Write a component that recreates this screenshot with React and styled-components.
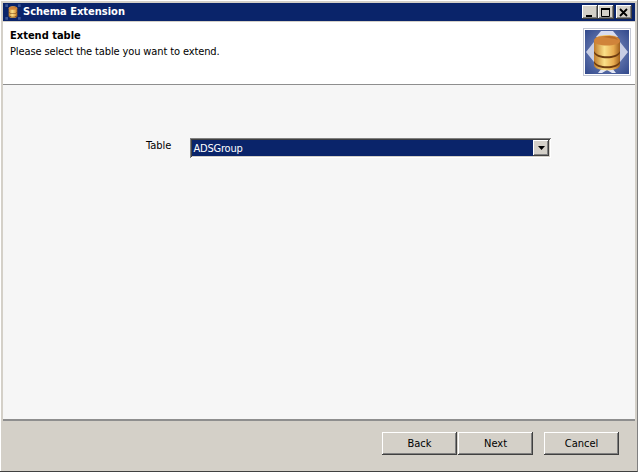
import React from "react";
import styled, { createGlobalStyle } from "styled-components";

const Global = createGlobalStyle`
  html, body { margin: 0; padding: 0; background: #d4d0c8; }
  * { box-sizing: border-box; }
`;
const Win = styled.div`
  width: 638px; height: 472px; display: flex; flex-direction: column;
  background: #d4d0c8; overflow: hidden;
  padding: 3px 2px 1px 3px;
  font-family: "DejaVu Sans Condensed", "DejaVu Sans", sans-serif; font-size: 11px; color: #000;
  border-bottom: 1px solid #404040; border-right: 1px solid #808080;
  box-shadow: inset 1px 1px 0 #fff;
`;
const TitleBar = styled.div`
  height: 18px; flex: none; background: #0a246a; display: flex; align-items: center;
  padding: 0 3px 0 0; color: #fff; font-weight: 700; font-size: 11px;
`;
const TitleIcon = styled.svg` width: 16px; height: 16px; margin: 0 2px 0 2px; flex: none; `;
const TitleText = styled.span` flex: 1; margin-top: -1px; `;
const CaptionBtn = styled.button`
  width: 16px; height: 14px; padding: 0; border: 0; background: #d4d0c8; display: flex;
  align-items: center; justify-content: center; margin-left: ${p => p.$gap || 0}px;
  box-shadow: inset -1px -1px 0 #404040, inset 1px 1px 0 #fff, inset -2px -2px 0 #808080;
`;
const Header = styled.div`
  height: 63px; flex: none; background: #fff; display: flex; justify-content: space-between;
  padding: 7px 4px 0 7px; border-bottom: 1px solid #8e8e8e; margin-top: 1px;
`;
const Heading = styled.div` font-weight: 700; font-size: 11px; line-height: 13px; `;
const Sub = styled.div` line-height: 13px; margin-top: 3px; letter-spacing: -0.12px; `;
const HeaderIcon = styled.svg` width: 48px; height: 48px; flex: none; margin-top: -1px; `;
const Body = styled.div`
  flex: 1; background: #f6f6f6; padding-top: 53px; display: flex; align-items: flex-start;
`;
const FieldLabel = styled.label` margin-top: 1px; padding-left: 143px; line-height: 13px; `;
const Select = styled.div`
  margin-left: 19px; width: 361px; height: 20px; background: #fff; padding: 2px; display: flex;
  box-shadow: inset 1px 1px 0 #808080, inset -1px -1px 0 #fff, inset 2px 2px 0 #404040, inset -2px -2px 0 #d4d0c8;
`;
const SelectValue = styled.div`
  flex: 1; background: #0a246a; color: #fff; line-height: 17px; padding-left: 1px; letter-spacing: -0.2px;
`;
const Arrow = styled.div`
  width: 16px; background: #d4d0c8; display: flex; align-items: center; justify-content: center;
  box-shadow: inset -1px -1px 0 #404040, inset 1px 1px 0 #fff, inset -2px -2px 0 #808080;
`;
const Footer = styled.div`
  height: 51px; flex: none; border-top: 2px solid #8e8e8e; background: #d4d0c8; display: flex;
  justify-content: flex-end; padding: 11px 16px 0 0;
`;
const Btn = styled.button`
  width: 75px; height: 23px; border: 0; padding: 0; background: #d4d0c8; color: #000;
  font: inherit; margin-left: ${p => p.$gap}px;
  box-shadow: inset -1px -1px 0 #404040, inset 1px 1px 0 #fff, inset -2px -2px 0 #808080;
`;

const Cylinder = ({ id }) => (
  <>
    <defs>
      <linearGradient id={id} x1="0" x2="1" y1="0" y2="0">
        <stop offset="0" stopColor="#c07c2c" />
        <stop offset="0.4" stopColor="#fae088" />
        <stop offset="0.75" stopColor="#e8ac50" />
        <stop offset="1" stopColor="#a0601c" />
      </linearGradient>
    </defs>
    <path d="M11 13c0-8 26-8 26 0v24c0 7-26 7-26 0z" fill={`url(#${id})`} />
    <path d="M11 13c0-7 26-7 26 0 0 6-26 6-26 0z" fill="#d0843a" />
    <path d="M20 9c6-2 13-1 15 3-5-2-10-2-15-3z" fill="#b86c28" />
    <path d="M11 23c3 7 23 7 26 0v2c-3 7-23 7-26 0zM11 33c3 7 23 7 26 0v2c-3 7-23 7-26 0z" fill="#6e3c10" />
  </>
);

const BigIcon = () => (
  <>
    <defs>
      <radialGradient id="bg" cx="0.5" cy="0.5" r="0.7">
        <stop offset="0" stopColor="#8898c8" />
        <stop offset="1" stopColor="#2c4488" />
      </radialGradient>
    </defs>
    <rect x="0.5" y="0.5" width="47" height="47" fill="url(#bg)" stroke="#c4c8d4" />
    <rect x="1.5" y="1.5" width="45" height="45" fill="none" stroke="#ffffff" />
    <path d="M13 9l5-6h12l5 6z" fill="#d8dcf0" />
    <path d="M3 24l8-10v20zM45 24l-8-10v20z" fill="#c8cee4" />
    <path d="M15 45l4-5h10l4 5h-4l-5-3-5 3z" fill="#e4e8f4" />
    <Cylinder id="cylBig" />
  </>
);

const SmallIcon = () => (
  <>
    <path d="M1 1h8v8H1zM39 1h8v8h-8zM1 39h8v8H1zM39 39h8v8h-8z" fill="#3a5596" />
    <Cylinder id="cylSmall" />
  </>
);

export default function App() {
  return (
    <Win>
      <Global />
      <TitleBar>
        <TitleIcon viewBox="0 0 48 48"><SmallIcon /></TitleIcon>
        <TitleText>Schema Extension</TitleText>
        <CaptionBtn>
          <svg width="10" height="9" viewBox="0 0 10 9"><rect x="1" y="7" width="6" height="2" fill="#000" /></svg>
        </CaptionBtn>
        <CaptionBtn>
          <svg width="10" height="9" viewBox="0 0 10 9"><path d="M0.5 1.5h8v7h-8z" fill="none" stroke="#000" /><rect x="0" y="0" width="9" height="2" fill="#000" /></svg>
        </CaptionBtn>
        <CaptionBtn $gap={2}>
          <svg width="10" height="9" viewBox="0 0 10 9"><path d="M1 1l7 7M8 1l-7 7" stroke="#000" strokeWidth="1.8" /></svg>
        </CaptionBtn>
      </TitleBar>
      <Header>
        <div>
          <Heading>Extend table</Heading>
          <Sub>Please select the table you want to extend.</Sub>
        </div>
        <HeaderIcon viewBox="0 0 48 48"><BigIcon /></HeaderIcon>
      </Header>
      <Body>
        <FieldLabel>Table</FieldLabel>
        <Select>
          <SelectValue>ADSGroup</SelectValue>
          <Arrow>
            <svg width="7" height="4" viewBox="0 0 7 4"><path d="M0 0h7L3.5 4z" fill="#000" /></svg>
          </Arrow>
        </Select>
      </Body>
      <Footer>
        <Btn $gap={0}>Back</Btn>
        <Btn $gap={1}>Next</Btn>
        <Btn $gap={11}>Cancel</Btn>
      </Footer>
    </Win>
  );
}
